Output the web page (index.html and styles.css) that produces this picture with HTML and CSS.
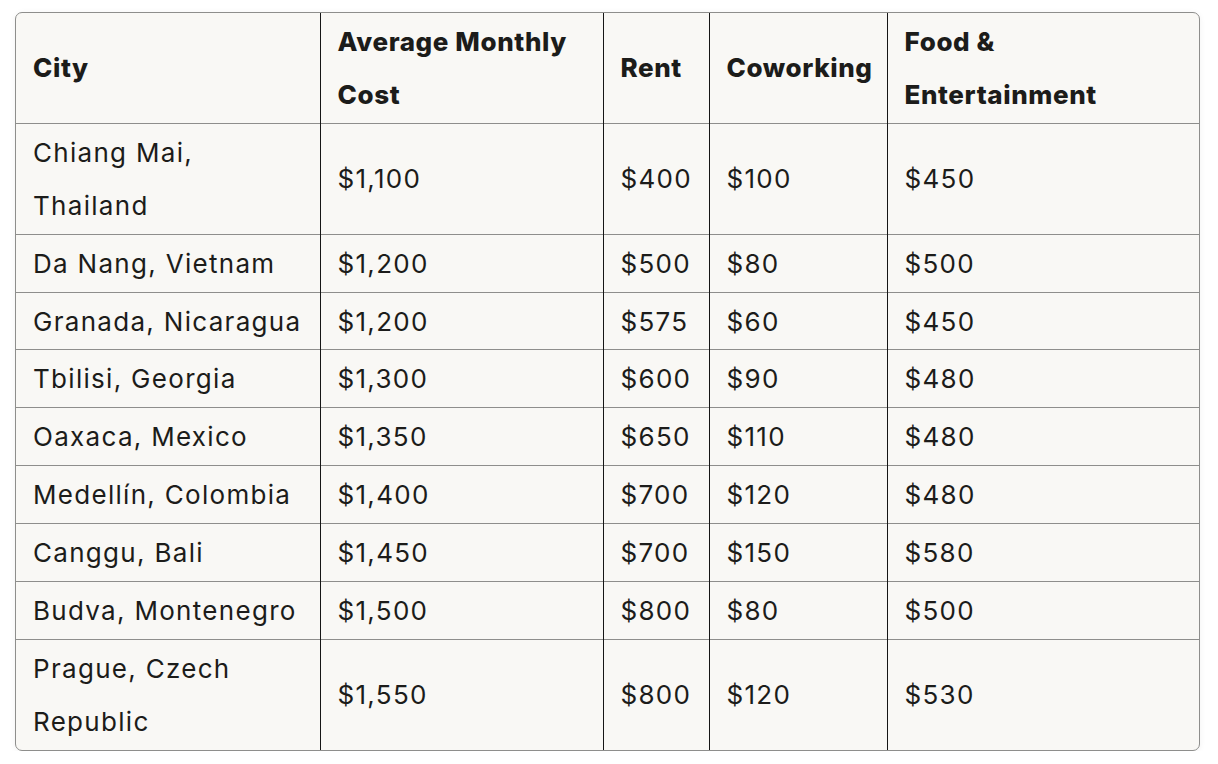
FILE: index.html
```html
<!DOCTYPE html>
<html lang="en">
<head>
<meta charset="utf-8">
<title>Nomad cities cost table</title>
<link rel="stylesheet" href="styles.css">
</head>
<body>
<div class="table-wrap">
  <table class="cost-table">
    <colgroup>
      <col class="c-city">
      <col class="c-avg">
      <col class="c-rent">
      <col class="c-cowork">
      <col class="c-food">
    </colgroup>
    <thead>
      <tr>
        <th>City</th>
        <th>Average Monthly Cost</th>
        <th>Rent</th>
        <th>Coworking</th>
        <th>Food &amp; Entertainment</th>
      </tr>
    </thead>
    <tbody>
      <tr><td>Chiang Mai, Thailand</td><td>$1,100</td><td>$400</td><td>$100</td><td>$450</td></tr>
      <tr><td>Da Nang, Vietnam</td><td>$1,200</td><td>$500</td><td>$80</td><td>$500</td></tr>
      <tr><td>Granada, Nicaragua</td><td>$1,200</td><td>$575</td><td>$60</td><td>$450</td></tr>
      <tr><td>Tbilisi, Georgia</td><td>$1,300</td><td>$600</td><td>$90</td><td>$480</td></tr>
      <tr><td>Oaxaca, Mexico</td><td>$1,350</td><td>$650</td><td>$110</td><td>$480</td></tr>
      <tr><td>Medellín, Colombia</td><td>$1,400</td><td>$700</td><td>$120</td><td>$480</td></tr>
      <tr><td>Canggu, Bali</td><td>$1,450</td><td>$700</td><td>$150</td><td>$580</td></tr>
      <tr><td>Budva, Montenegro</td><td>$1,500</td><td>$800</td><td>$80</td><td>$500</td></tr>
      <tr><td>Prague, Czech Republic</td><td>$1,550</td><td>$800</td><td>$120</td><td>$530</td></tr>
    </tbody>
  </table>
</div>
</body>
</html>
```
FILE: styles.css
```css
html, body {
  margin: 0;
  padding: 0;
  background: #ffffff;
}

body {
  padding: 12px 18px 0 15px;
  font-family: Inter, "Noto Sans", sans-serif;
  color: #1c1c1a;
}

.table-wrap {
  width: 1183px;
  border: 1px solid #8e8e8c;
  border-radius: 7px;
  overflow: hidden;
  background: #f9f8f5;
  box-shadow: 0 1px 6px rgba(0, 0, 0, 0.06);
}

.cost-table {
  width: 100%;
  table-layout: fixed;
  border-collapse: collapse;
  font-size: 26px;
  line-height: 52.9px;
}

.c-city { width: 304px; }
.c-avg { width: 283px; }
.c-rent { width: 106px; }
.c-cowork { width: 178px; }
.c-food { width: auto; }

.cost-table th,
.cost-table td {
  text-align: left;
  vertical-align: middle;
  padding: 3px 17px 1px 17px;
  border-left: 1px solid #161616;
  border-top: 1px solid #8e8e8c;
}

.cost-table th {
  font-weight: 800;
  letter-spacing: 0.6px;
}

.cost-table td {
  font-weight: 400;
  letter-spacing: 1.3px;
}

.cost-table th:first-child,
.cost-table td:first-child {
  border-left: none;
}

.cost-table thead tr:first-child th {
  border-top: none;
}
```
